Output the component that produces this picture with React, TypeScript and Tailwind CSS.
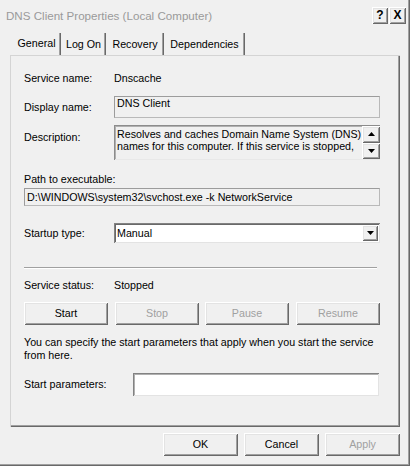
const raised =
  'shadow-[inset_1px_1px_#ffffff,inset_-1px_-1px_#696969,inset_2px_2px_#e3e3e3,inset_-2px_-2px_#a0a0a0]';

function Btn({ label, disabled, w }: { label: string; disabled?: boolean; w: string }) {
  return (
    <div
      className={`${w} h-[23px] flex items-center justify-center bg-[#f0f0f0] shadow-[inset_1px_1px_#ffffff,inset_-1px_-1px_#696969,inset_2px_2px_#e3e3e3,inset_-2px_-2px_#a0a0a0] ${
        disabled ? 'text-[#a0a0a0]' : 'text-black'
      }`}
    >
      {label}
    </div>
  );
}

function Arrow({ up }: { up?: boolean }) {
  return (
    <svg width="7" height="4" viewBox="0 0 7 4">
      {up ? <path d="M0 4 L3.5 0 L7 4 Z" fill="#000" /> : <path d="M0 0 L7 0 L3.5 4 Z" fill="#000" />}
    </svg>
  );
}

export default function App() {
  return (
    <div className="w-[410px] h-[466px] bg-[#f0f0f0] font-['Liberation_Sans',Arial,sans-serif] text-[10.7px] leading-[13px] text-black shadow-[inset_-1px_-1px_#696969,inset_-2px_-2px_#a0a0a0] overflow-hidden">
      {/* title bar */}
      <div className="h-[31px] flex items-center justify-between pl-[6px] pr-[4px]">
        <span className="text-[11.6px] text-[#9a9a9a]">DNS Client Properties (Local Computer)</span>
        <div className="flex gap-[1px] self-start mt-[7px]">
          <div className={`w-[16px] h-[17px] flex items-center justify-center font-bold text-[12px] ${raised}`}>?</div>
          <div className={`w-[17px] h-[17px] flex items-center justify-center font-bold text-[12px] ${raised}`}>X</div>
        </div>
      </div>

      {/* tabs */}
      <div className="h-[22px] flex pl-[12px] mt-[2px]">
        <div className="w-[49px] h-full flex items-center justify-center pb-[2px] shadow-[inset_-1px_0_#696969,inset_-2px_0_#a0a0a0]">
          General
        </div>
        <div className="w-[45px] h-full flex items-center justify-center pt-[1px] shadow-[inset_-1px_0_#696969,inset_-2px_0_#a0a0a0]">
          Log On
        </div>
        <div className="w-[58px] h-full flex items-center justify-center pt-[1px] shadow-[inset_-1px_0_#696969,inset_-2px_0_#a0a0a0]">
          Recovery
        </div>
        <div className="w-[81px] h-full flex items-center justify-center pt-[1px] shadow-[inset_-1px_0_#696969,inset_-2px_0_#a0a0a0]">
          Dependencies
        </div>
      </div>

      {/* panel */}
      <div className="ml-[10px] w-[390px] h-[372px] flex flex-col pl-[14px] shadow-[inset_1px_1px_#d4d4d4,inset_-1px_-1px_#696969,inset_-2px_-2px_#a0a0a0]">
        <div className="mt-[16px] h-[14px] flex items-center">
          <span className="w-[90px]">Service name:</span>
          <span>Dnscache</span>
        </div>

        <div className="mt-[11px] flex items-center">
          <span className="w-[90px] pt-[1px]">Display name:</span>
          <div className="w-[266px] h-[22px] border border-[#b9b9b9] border-t-[#9c9c9c] border-l-[#9c9c9c] pl-[2px] pt-[0px]">
            DNS Client
          </div>
        </div>

        <div className="mt-[7px] flex items-start">
          <span className="w-[90px] mt-[6px]">Description:</span>
          <div className="w-[266px] h-[35px] flex bg-[#f0f0f0] shadow-[inset_1px_1px_#8c8c8c,inset_-1px_-1px_#e8e8e8,inset_2px_2px_#b0b0b0]">
            <div className="flex-1 pl-[3px] pt-[3px] leading-[12px]">
              Resolves and caches Domain Name System (DNS) names for this computer. If this service is stopped,
            </div>
            <div className="w-[18px] flex flex-col pt-[1px] pb-[1px] pr-[0px]">
              <div className={`h-[17px] flex items-center justify-center ${raised}`}>
                <Arrow up />
              </div>
              <div className={`h-[17px] flex items-center justify-center ${raised}`}>
                <Arrow />
              </div>
            </div>
          </div>
        </div>

        <div className="mt-[12px] h-[14px] flex items-center">Path to executable:</div>
        <div className="mt-[2px] w-[356px] h-[18px] flex items-center pl-[2px] border border-[#b9b9b9] border-t-[#9c9c9c] border-l-[#9c9c9c]">
          {'D:\\WINDOWS\\system32\\svchost.exe -k NetworkService'}
        </div>

        <div className="mt-[17px] flex items-center">
          <span className="w-[90px]">Startup type:</span>
          <div className="w-[266px] h-[20px] flex items-center bg-white pl-[3px] pr-[2px] shadow-[inset_1px_1px_#828282,inset_-1px_-1px_#e3e3e3,inset_2px_2px_#696969]">
            <span className="flex-1 pt-[1px]">Manual</span>
            <div className={`w-[16px] h-[16px] flex items-center justify-center bg-[#f0f0f0] ${raised}`}>
              <Arrow />
            </div>
          </div>
        </div>

        <div className="mt-[24px] w-[353px] h-[2px] border-t border-[#a0a0a0] border-b border-b-white" />

        <div className="mt-[9px] h-[14px] flex items-center">
          <span className="w-[90px]">Service status:</span>
          <span>Stopped</span>
        </div>

        <div className="mt-[10px] flex">
          <Btn label="Start" w="w-[84px]" />
          <div className="ml-[7px]">
            <Btn label="Stop" w="w-[84px]" disabled />
          </div>
          <div className="ml-[6px]">
            <Btn label="Pause" w="w-[84px]" disabled />
          </div>
          <div className="ml-[7px]">
            <Btn label="Resume" w="w-[84px]" disabled />
          </div>
        </div>

        <p className="mt-[11px] w-[360px]">
          You can specify the start parameters that apply when you start the service from here.
        </p>

        <div className="mt-[11px] flex items-center">
          <span className="w-[109px]">Start parameters:</span>
          <div className="w-[246px] h-[23px] bg-white shadow-[inset_1px_1px_#828282,inset_-1px_-1px_#e3e3e3,inset_2px_2px_#b0b0b0]" />
        </div>
      </div>

      {/* dialog buttons */}
      <div className="mt-[6px] flex justify-end gap-[6px] pr-[10px]">
        <Btn label="OK" w="w-[75px]" />
        <Btn label="Cancel" w="w-[75px]" />
        <Btn label="Apply" w="w-[75px]" disabled />
      </div>
    </div>
  );
}
